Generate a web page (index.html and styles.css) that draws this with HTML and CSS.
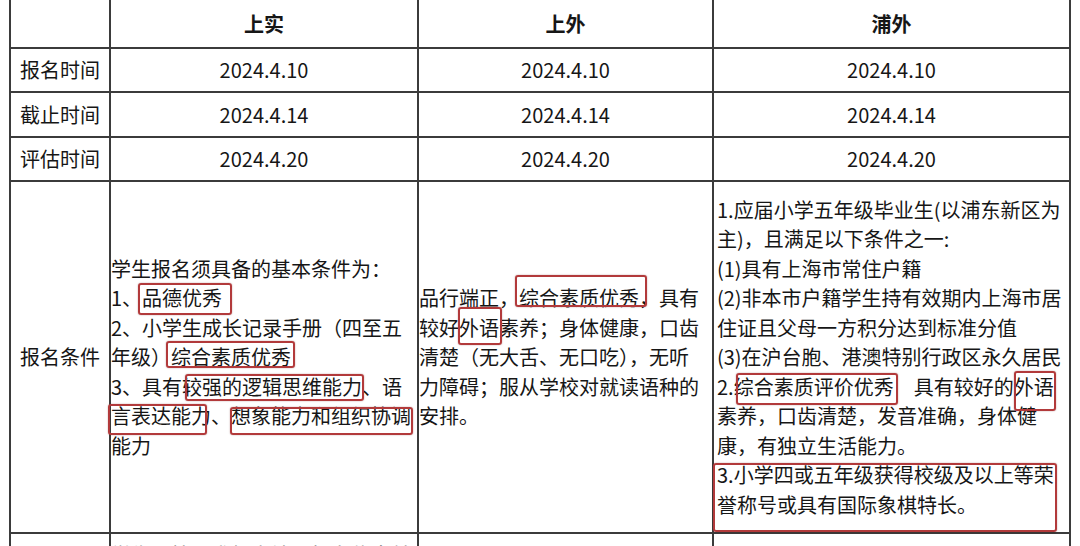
FILE: index.html
```html
<!DOCTYPE html>
<html lang="zh-CN">
<head>
<meta charset="utf-8">
<title>招生报名对照表</title>
<link rel="stylesheet" href="styles.css">
</head>
<body>
<table class="sheet">
  <colgroup>
    <col class="w-label">
    <col class="w-a">
    <col class="w-b">
    <col class="w-c">
  </colgroup>
  <tr class="head">
    <th></th>
    <th>上实</th>
    <th>上外</th>
    <th>浦外</th>
  </tr>
  <tr class="date r-a">
    <td class="label">报名时间</td>
    <td>2024.4.10</td>
    <td>2024.4.10</td>
    <td>2024.4.10</td>
  </tr>
  <tr class="date r-b">
    <td class="label">截止时间</td>
    <td>2024.4.14</td>
    <td>2024.4.14</td>
    <td>2024.4.14</td>
  </tr>
  <tr class="date r-c">
    <td class="label">评估时间</td>
    <td>2024.4.20</td>
    <td>2024.4.20</td>
    <td>2024.4.20</td>
  </tr>
  <tr class="cond">
    <td class="label">报名条件</td>
    <td class="c2">学生报名须具备的基本条件为：<br>1、<span class="mk mk1">品德优秀</span><br>2、小学生成长记录手册（四至五<br>年级）<span class="mk mk2">综合素质优秀</span><br>3、具有<span class="mk mk3">较强的逻辑思维能力</span>、语<br><span class="mk mk4">言表达能力</span>、<span class="mk mk5">想象能力和组织协调</span><br>能力</td>
    <td class="c3">品行端正，<span class="mk mk6">综合素质优秀</span>，具有<br>较好<span class="mk mk7">外语</span>素养；身体健康，口齿<br>清楚（无大舌、无口吃），无听<br>力障碍；服从学校对就读语种的<br>安排。</td>
    <td class="c4">1.应届小学五年级毕业生(以浦东新区为<br>主)，且满足以下条件之一:<br>(1)具有上海市常住户籍<br>(2)非本市户籍学生持有效期内上海市居<br>住证且父母一方积分达到标准分值<br>(3)在沪台胞、港澳特别行政区永久居民<br>2.<span class="mk mk8">综合素质评价优秀</span>　具有较好的<span class="mk mk9">外语</span><br>素养，口齿清楚，发音准确，身体健<br>康，有独立生活能力。<div class="mkblock">3.小学四或五年级获得校级及以上等荣<br>誉称号或具有国际象棋特长。</div></td>
  </tr>
  <tr class="next">
    <td class="label"></td>
    <td class="c2 top">学生须按要求如实填写报名信息并</td>
    <td class="c3 top"></td>
    <td class="c4 top"></td>
  </tr>
</table>
</body>
</html>
```

FILE: styles.css
```css
html, body {
  margin: 0;
  padding: 0;
  background: #ffffff;
}

body {
  width: 1080px;
  height: 546px;
  overflow: hidden;
  font-family: "Noto Sans CJK SC", "Noto Sans", sans-serif;
  color: #161616;
}

.sheet {
  border-collapse: collapse;
  table-layout: fixed;
  width: 1062px;
  margin-left: 9px;
}

.w-label { width: 100px; }
.w-a { width: 308px; }
.w-b { width: 295px; }
.w-c { width: 357px; }

.sheet th,
.sheet td {
  border: 2px solid #3b3b3b;
  padding: 0;
  font-size: 20px;
  line-height: 29.5px;
  vertical-align: middle;
}

.head th {
  border-top: 0;
  height: 47px;
  font-weight: 700;
  text-align: center;
}

.date td {
  text-align: center;
}

.r-a td { height: 42px; }
.r-b td { height: 43px; }
.r-c td { height: 42px; }

.label {
  text-align: center;
}

.cond td {
  height: 350px;
}

.c2, .c3, .c4 {
  text-align: left;
  white-space: nowrap;
}

.c2 {
  font-size: 19.4px;
  padding-left: 4px;
}

.c3 {
  font-size: 19.6px;
  padding-left: 3px;
}

.sheet .c4 {
  padding-left: 3px;
}

.next td {
  height: 60px;
}

.sheet .top {
  vertical-align: top;
  padding-top: 6px;
  color: #8a8a8a;
}

/* red annotation frames drawn over the text */
.mk {
  position: relative;
}

.mk::after,
.mkblock::after {
  content: "";
  position: absolute;
  border: 2px solid #b23a3b;
  border-radius: 3px;
  box-shadow: 0 0 1.5px rgba(90, 10, 10, 0.45);
  pointer-events: none;
}

.mk1::after { left: -4px; right: -10px; top: 0; bottom: -3px; }
.mk2::after { left: -5px; right: -4px; top: -1px; bottom: 3px; }
.mk3::after { left: 3px; right: -2px; top: 2px; bottom: 0; }
.mk4::after { left: -3px; right: 4px; top: 3px; bottom: -5px; }
.mk5::after { left: -1px; right: -2px; top: 6px; bottom: -5px; }
.mk6::after { left: -4px; right: -8px; top: -8px; bottom: 5px; }
.mk7::after { left: -1px; right: -3px; top: -6px; bottom: -3px; }
.mk8::after { left: 2px; right: -4px; top: 1px; bottom: -4px; }
.mk9::after { left: 0; right: -2px; top: -1px; bottom: -10px; }

.mkblock {
  position: relative;
}

.mkblock::after {
  left: -4px;
  right: 12px;
  top: 3px;
  bottom: -13px;
}
```
